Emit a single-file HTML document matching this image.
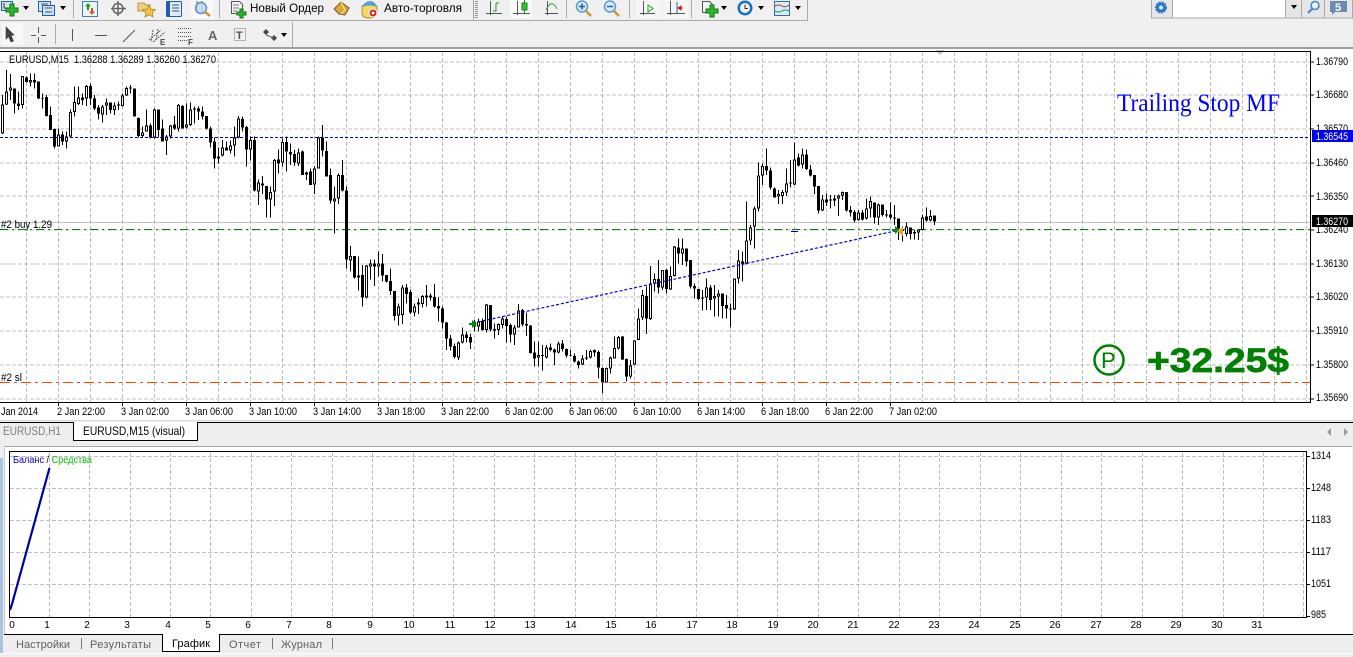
<!DOCTYPE html>
<html><head><meta charset="utf-8"><style>
html,body{margin:0;padding:0;background:#f0f0f0;overflow:hidden}
svg{display:block}
text{font-family:"Liberation Sans","Noto Sans CJK SC",sans-serif;font-size:10px;fill:#000;white-space:pre}
.a{font-size:11px}
.g{stroke:#c0c0c0;stroke-width:1;stroke-dasharray:4 2;fill:none}
.w{stroke:#000;stroke-width:3;fill:none}
.b{stroke:#000;stroke-width:9;fill:none}
.i{stroke:#fff;stroke-width:3;fill:none}
.t{font-size:11px;fill:#606060}
</style></head><body>
<svg width="1353" height="657" viewBox="0 0 1353 657" xmlns="http://www.w3.org/2000/svg">
<rect width="1353" height="657" fill="#f0f0f0"/>
<!-- toolbar structure -->
<path d="M0 20.500H807.500V0" stroke="#aaa" fill="none"/>
<path d="M0 47.500H292.500V22" stroke="#aaa" fill="none"/>
<rect x="0" y="47" width="1353" height="2" fill="#a0a0a0"/>
<path d="M73.500 0V18M219.500 0V18M473.500 0V20M566.500 0V18M629.500 0V18M691.500 0V18M55.500 24V44" stroke="#aaa"/>
<path d="M476.500 1V19" stroke="#999" stroke-width="3" stroke-dasharray="1 1"/>
<!-- row 1 icons -->
<g>
<rect x="1.500" y="1.500" width="11" height="9" fill="#cfe3f7" stroke="#1f5fa8"/>
<path d="M4 3V8H10" stroke="#333" fill="none"/>
<path d="M10 4H14V8H18V12H14V16H10V12H6V8H10Z" fill="#2fb52f" stroke="#0c7a0c"/>
<path d="M23 6h6l-3 4z" fill="#000"/>
<rect x="38.500" y="1.500" width="12" height="10" fill="#d8e8f8" stroke="#1f5fa8"/>
<rect x="42.500" y="5.500" width="12" height="10" fill="#cfe3f7" stroke="#1f5fa8"/>
<path d="M41 4H48M45 8H52M45 12H52" stroke="#456"/>
<path d="M60 6h6l-3 4z" fill="#000"/>
<rect x="82.500" y="1.500" width="15" height="15" fill="#eef4fb" stroke="#3f7fc0"/>
<path d="M88 3l3 3.500H89V10H87V6.500H85Z" fill="#16a016"/>
<path d="M92 15l3-3.500H93V8H91v3.500H89Z" fill="#e05020"/>
<circle cx="118" cy="8.500" r="5" fill="none" stroke="#666" stroke-width="1.500"/>
<path d="M118 1V16M111 8.500H126" stroke="#666" stroke-width="1.500"/>
<path d="M138 3h6l2 2h4v6h-12z" fill="#f0d080" stroke="#b89440"/>
<path d="M149 5l2 4 4.500.600-3.300 3 .8 4.400-4-2.200-4 2.200.8-4.400-3.300-3 4.500-.600z" fill="#f4c040" stroke="#a08020" stroke-width=".7"/>
<rect x="166.500" y="1.500" width="15" height="15" rx="1" fill="#dcebfa" stroke="#1f5fa8"/>
<path d="M167 2h3v14h-3z" fill="#1f5fa8"/><path d="M172 5h7M172 8h7M172 11h7" stroke="#456"/>
<rect x="191" y="0" width="22" height="18" fill="#f8f8f8"/>
<path d="M197 1V13M202 1V13" stroke="#666"/>
<circle cx="201" cy="8" r="5.500" fill="#bcd8f2" fill-opacity=".8" stroke="#6a90b8" stroke-width="1.500"/>
<path d="M205 12l5 4" stroke="#c89a30" stroke-width="2.500"/>
<path d="M231.500 1.500h8l3 3v9h-11z" fill="#f4f4f4" stroke="#555"/><path d="M233 5h6M233 8h6M233 11h4" stroke="#777"/>
<path d="M240 9h3v3h3v3h-3v3h-3v-3h-3v-3h3z" fill="#2fb52f" stroke="#0c7a0c"/>
<text x="250" y="12" textLength="74" lengthAdjust="spacingAndGlyphs" style="font-size:12px">Новый Ордер</text>
<path d="M334 9l7-7 8 6-4 7-6-1z" fill="#d8a838" stroke="#7a5a18"/><path d="M341 2l4 8-4 4" stroke="#fbe8a0" fill="none"/>
<path d="M362 6q8-5 15 0v8q-2 4-8 4t-7-4z" fill="#f4d860" stroke="#b09030"/>
<path d="M362 7q3-6 8-6t7 6q-7-3-15 0z" fill="#5a9fd8"/>
<circle cx="373" cy="13" r="4" fill="#d02020" stroke="#fff"/><circle cx="373" cy="13" r="1.500" fill="#fff"/>
<text x="384" y="12" textLength="78" lengthAdjust="spacingAndGlyphs" style="font-size:12px">Авто-торговля</text>
<path d="M490.500 1V15M486 13.500H502" stroke="#555" fill="none"/>
<path d="M496 3H499M496 3V11H493" stroke="#16a016" fill="none"/>
<rect x="510" y="0" width="22" height="18" fill="#f8f8f8"/>
<path d="M517.500 1V15M513 13.500H530" stroke="#555"/>
<path d="M524.500 0V14" stroke="#1a8a1a"/><rect x="522" y="3" width="5" height="7" fill="#30c030" stroke="#1a8a1a"/>
<path d="M547.500 1V15M545 13.500H558" stroke="#555"/><path d="M546 10q4-8 7-6t4 5" stroke="#3a9a3a" fill="none"/>
<circle cx="582" cy="6.500" r="5.500" fill="#d8eaf8" stroke="#5a9ad0" stroke-width="1.500"/><path d="M579 6.500h6M582 3.500v6" stroke="#2060a0" stroke-width="1.500"/><path d="M586 11l5 5" stroke="#c89a30" stroke-width="2.500"/>
<circle cx="610" cy="6.500" r="5.500" fill="#d8eaf8" stroke="#5a9ad0" stroke-width="1.500"/><path d="M607 6.500h6" stroke="#2060a0" stroke-width="1.500"/><path d="M614 11l5 5" stroke="#c89a30" stroke-width="2.500"/>
<rect x="636" y="0" width="25" height="18" fill="#f6f6f6"/>
<path d="M643.500 1V15M640 13.500H655" stroke="#555"/><path d="M648 5l5 3.500-5 3.500z" fill="#fff" stroke="#20a020"/>
<rect x="663" y="0" width="25" height="18" fill="#f6f6f6"/>
<path d="M670.500 1V15M667 13.500H685" stroke="#555"/><path d="M677 2V14" stroke="#3060b0"/><path d="M683 8h-4M678 8l3-2v4z" fill="#c02020" stroke="#c02020"/>
<path d="M702.500 1.500h7l3 3v8h-10z" fill="#f4f4f4" stroke="#555"/>
<path d="M710 5h4v4h4v4h-4v4h-4v-4h-4V9h4z" fill="#2fb52f" stroke="#0c7a0c"/>
<path d="M721 6h6l-3 4z" fill="#000"/>
<circle cx="745" cy="8" r="7.500" fill="#1f6fc0"/><circle cx="745" cy="8" r="5" fill="#f4f4f4"/><path d="M745 4.500V8.500H748" stroke="#333" fill="none"/>
<path d="M758 6h6l-3 4z" fill="#000"/>
<rect x="774.500" y="1.500" width="15" height="14" fill="#dcebfa" stroke="#2f6fb0"/><path d="M775 6q4-2 7 0t7-1" stroke="#b04020" fill="none"/><path d="M775 11q4 2 7 0t7 0" stroke="#20a040" fill="none"/>
<path d="M795 6h6l-3 4z" fill="#000"/>
</g>
<!-- right controls -->
<rect x="1151.500" y="-1" width="201" height="19" fill="#e6e6e6" stroke="#aaa"/>
<rect x="1172.500" y="-1" width="113" height="19" fill="#fff" stroke="#aaa"/>
<path d="M1301.500 0V18M1324.500 0V18" stroke="#aaa"/>
<circle cx="1161" cy="7.500" r="5" fill="#2f75c8" stroke="#2f75c8" stroke-width="2" stroke-dasharray="2 1"/><circle cx="1161" cy="7.500" r="2" fill="#dbeafa"/>
<path d="M1291 5h6l-3 4z" fill="#000"/>
<circle cx="1315" cy="5.500" r="4" fill="#eaf3fb" stroke="#3f86cc" stroke-width="1.500"/><path d="M1312 9l-4 4" stroke="#3f86cc" stroke-width="2"/>
<path d="M1330 1h17v11h-12l-3 3v-3h-2z" fill="#6a8ab0"/>
<text x="1335" y="11" style="font-size:11px;font-weight:bold;fill:#fff">5</text>
<!-- row 2 icons -->
<rect x="2" y="23" width="21" height="22" fill="#f8f8f8"/>
<path d="M6 27l8 8-3 .500 2.500 5.500-2.500 1-2.500-5.500-2.500 2.500z" fill="#444" stroke="#333" stroke-width=".6"/>
<path d="M38.500 27V33M38.500 37V43M31 35.500H36M41 35.500H46" stroke="#555"/>
<path d="M72.500 29V41" stroke="#555"/>
<path d="M95 35.500H107" stroke="#555"/>
<path d="M123 42L135 30" stroke="#666" stroke-width="1.200"/>
<path d="M149 40l12-10M153 42l12-10M153 30l-2 12M158 29l-2 12" stroke="#555" fill="none" stroke-dasharray="2 1"/>
<text x="160" y="45" style="font-size:8px;font-weight:bold;fill:#444">E</text>
<path d="M178 28.500H192M178 32.500H192M178 36.500H192M178 40.500H187" stroke="#555" stroke-dasharray="1 1"/>
<text x="188" y="45" style="font-size:8px;font-weight:bold;fill:#444">F</text>
<text x="208" y="40" style="font-size:13px;font-weight:bold;fill:#666">A</text>
<rect x="234.500" y="28.500" width="11" height="12" fill="none" stroke="#777" stroke-dasharray="1 1"/>
<text x="236" y="39" style="font-size:11px;font-weight:bold;fill:#555">T</text>
<path d="M266 29l3 3-3 3-3-3zM274 35l3 3-3 3-3-3z" fill="#444"/><path d="M266 35l8 3" stroke="#666"/>
<path d="M281 33h6l-3 4z" fill="#000"/>

<!-- main chart -->
<rect x="0" y="49" width="1353" height="372" fill="#fff"/>
<path class="g" d="M0 62H1310M0 95H1310M0 129H1310M0 163H1310M0 196H1310M0 230H1310M0 264H1310M0 297H1310M0 331H1310M0 365H1310M0 399H1310"/>
<path class="g" d="M26.500 52V402M58.500 52V402M90.500 52V402M122.500 52V402M154.500 52V402M186.500 52V402M218.500 52V402M250.500 52V402M282.500 52V402M314.500 52V402M346.500 52V402M378.500 52V402M410.500 52V402M442.500 52V402M474.500 52V402M506.500 52V402M538.500 52V402M570.500 52V402M602.500 52V402M634.500 52V402M666.500 52V402M698.500 52V402M730.500 52V402M762.500 52V402M794.500 52V402M826.500 52V402M858.500 52V402M890.500 52V402M922.500 52V402M954.500 52V402M986.500 52V402M1018.500 52V402M1050.500 52V402M1082.500 52V402M1114.500 52V402M1146.500 52V402M1178.500 52V402M1210.500 52V402M1242.500 52V402M1274.500 52V402M1306.500 52V402"/>
<path d="M0 222.500H1310" stroke="#c0c0c0"/>
<path d="M0 229.500H1310" stroke="#0a7a0a" stroke-dasharray="8 4 2 4"/>
<g shape-rendering="crispEdges">
<g transform="matrix(.33333 0 0 .33333 0 60)">
<path class="w" d="M8 105V222M20 30V135M32 42V120M44 85V160M56 95V150M68 48V145M80 50V68M92 40V80M104 40V85M116 65V117M128 100V145M140 105V170M152 140V205M164 205V265M176 205V260M188 215V255M200 215V265M212 148V232M224 80V170M236 80V135M248 100V135M260 75V138M272 70V135M284 105V150M296 135V178M308 135V188M320 115V165M332 128V160M344 128V165M356 125V150M368 100V140M380 80V108M392 75V100M404 85V170M416 172V232M428 200V232M440 148V215M452 190V235M464 145V235M476 148V232M488 178V245M500 225V285M512 195V235M524 168V210M536 132V215M548 135V205M560 130V205M572 128V198M584 140V190M596 140V180M608 140V178M620 168V208M632 200V262M644 232V325M656 262V310M668 240V290M680 245V272M692 242V280M704 200V290M716 168V235M728 170V215M740 198V320M752 230V302M764 230V395M776 358V435M788 348V402M800 378V472M812 380V472M824 297V438M836 268V340M848 235V320M860 230V335M872 250V315M884 270V318M896 265V318M908 272V345M920 335V360M932 325V375M944 318V402M956 230V325M968 195V290M980 245V350M992 325V430M1004 380V520M1016 340V432M1028 300V395"/>
<path class="b" d="M8 133V220M20 95V133M32 82V92M44 85V130M56 130V138M68 48V135M80 52V66M92 60V68M104 60V68M116 65V115M128 114V116M140 111V168M152 165V210M164 207V260M176 224V260M188 224V245M200 230V245M212 156V230M224 126V156M236 112V132M248 112V120M260 78V116M272 78V116M284 115V146M296 142V160M308 140V163M320 127V136M332 127V150M344 136V150M356 134V137M368 106V138M380 84V106M392 83V86M404 85V170M416 174V228M428 217V228M440 196V215M452 196V232M464 148V232M476 148V210M488 205V245M500 230V242M512 196V230M524 193V205M536 135V205M548 138V205M560 194V203M572 148V195M584 146V148M596 146V155M608 154V170M620 168V206M632 205V248M644 244V296M656 290V296M668 262V287M680 262V272M692 256V272M704 232V256M716 175V232M728 177V203M740 201V268M752 240V268M764 240V392M776 367V395M788 370V376M800 378V418M812 396V418M824 300V395M836 298V310M848 246V308M860 246V275M872 276V284M884 282V308M896 277V310M908 275V345M920 337V343M932 335V375M944 325V373M956 232V325M968 232V272M980 273V350M992 345V422M1004 415V425M1016 345V415M1028 345V392"/>
<path class="i" d="M8 136V217M20 98V130M32 85V89M68 51V132M92 63V65M176 227V257M200 233V242M212 159V227M224 129V153M236 115V129M260 81V113M308 143V160M320 130V133M344 139V147M368 109V135M380 87V103M428 220V225M440 199V212M464 151V229M500 233V239M512 199V227M536 138V202M560 197V200M572 151V192M656 293V293.100M668 265V284M692 259V269M704 235V253M716 178V229M752 243V265M776 370V392M812 399V415M824 303V392M848 249V305M896 280V307M920 340V340.100M944 328V370M956 235V322M1004 418V422M1016 348V412"/>
</g>
<g transform="matrix(.33333 0 0 .33333 330 210)">
<path class="w" d="M49 -70V175M61 108V185M73 138V205M85 140V242M97 165V290M109 165V265M121 148V208M133 148V228M145 125V200M157 132V215M169 195V218M181 175V255M193 243V332M205 280V347M217 225V342M229 222V280M241 240V312M253 280V320M265 265V312M277 255V292M289 225V290M301 250V272M313 222V292M325 262V335M337 290V355M349 336V420M361 375V422M373 400V445M385 395V450M397 352V400M409 365V397M421 370V417M433 330V365M445 325V365M457 325V362M469 282V368M481 285V365M493 340V385M505 340V375M517 320V355M529 320V398M541 340V398M553 345V405M565 282V353M577 297V350M589 308V378M601 345V430M613 395V470M625 395V470M637 405V482M649 405V445M661 400V425M673 415V465M685 395V430M697 390V425M709 415V442M721 420V440M733 430V458M745 452V475M757 435V465M769 420V450M781 418V445M793 418V440M805 422V505M817 472V550M829 472V518M841 440V490M853 380V445M865 378V418M877 378V450M889 445V515M901 450V505M913 390V465"/>
<path class="b" d="M49 -58V148M61 138V152M73 138V203M85 197V203M97 195V263M109 167V263M121 160V170M133 160V170M145 160V170M157 160V197M169 195V215M181 213V243M193 243V318M205 290V317M217 232V315M229 232V252M241 246V308M253 290V308M265 278V284M277 258V282M289 256V262M301 256V262M313 261V290M325 288V296M337 295V338M349 337V385M361 385V410M373 408V441M385 397V443M397 373V397M409 373V384M421 381V398M433 345V350M445 335V350M457 333V360M469 284V360M481 285V358M493 357V362M505 342V360M517 325V345M529 327V348M541 345V374M553 352V374M565 302V352M577 300V344M589 342V347M601 347V429M613 427V445M625 435V443M637 435V438M649 412V442M661 412V420M673 418V428M685 400V428M697 400V417M709 417V437M721 435V437M733 438V455M745 454V465M757 445V464M769 442V446M781 423V443M793 420V428M805 426V473M817 474V518M829 474V518M841 442V476M853 414V446M865 381V416M877 380V449M889 447V500M901 466V499M913 391V464"/>
<path class="i" d="M61 141V149M109 170V260M121 163V167M145 163V167M205 293V314M217 235V312M253 293V305M265 281V281.100M277 261V279M385 400V440M397 376V394M445 338V347M469 287V357M505 345V357M517 328V342M553 355V371M565 305V349M625 438V440M649 415V439M685 403V425M757 448V461M781 426V440M829 477V515M841 445V473M853 417V443M865 384V413M901 469V496M913 394V461"/>
</g>
<g transform="matrix(.33333 0 0 .33333 620 130)">
<path class="w" d="M55 535V630M67 480V570M79 470V612M91 408V570M103 430V485M115 390V490M127 420V480M139 415V490M151 410V480M163 348V440M175 325V400M187 325V405M199 355V410M211 390V475M223 460V505M235 477V510M247 480V542M259 445V540M271 465V540M283 465V560M295 480V560M307 490V565M319 495V565M331 520V592M343 445V540M355 360V460M367 365V455M379 215V403M391 285V345M403 230V355M415 97V245M427 100V165M439 55V135M451 112V178M463 173V203M475 180V222M487 180V222M499 115V198M511 90V172M523 38V165M535 70V110M547 55V115M559 58V120M571 105V140M583 135V192M595 168V250M607 195V243M619 190V228M631 195V235M643 195V228M655 193V258M667 185V210M679 186V245M691 228V260M703 240V278M715 240V272M727 240V272M739 205V268M751 200V262M763 217V280M775 220V285M787 223V260M799 240V262M811 218V268M823 225V285M835 265V330M847 290V335M859 278V320M871 292V328M883 300V328M895 298V330M907 255V302M919 232V275M931 240V275M943 256V285"/>
<path class="b" d="M55 565V630M67 495V563M79 498V565M91 460V567M103 447V461M115 447V473M127 420V473M139 420V477M151 438V479M163 350V438M175 352V371M187 355V371M199 355V395M211 390V470M223 468V476M235 477V507M247 502V506M259 472V503M271 472V510M283 498V505M295 490V500M307 490V528M319 525V535M331 535V538M343 445V538M355 391V446M367 394V401M379 331V401M391 292V331M403 235V290M415 136V235M427 108V136M439 108V122M451 122V173M463 175V203M475 192V200M487 186V198M499 160V187M511 158V161M523 88V163M535 82V107M547 73V103M559 73V117M571 118V137M583 135V170M595 168V242M607 208V241M619 208V218M631 208V212M643 205V211M655 196V206M667 186V196M679 186V242M691 240V248M703 246V271M715 248V270M727 248V268M739 235V266M751 213V236M763 217V263M775 223V262M787 223V255M799 253V257M811 254V263M823 263V265M835 265V295M847 300V303M859 290V312M871 292V312M883 306V311M895 298V307M907 262V300M919 259V272M931 258V272M943 256V275"/>
<path class="i" d="M55 568V627M67 498V560M91 463V564M103 450V458M127 423V470M151 441V476M163 353V435M187 358V368M259 475V500M283 501V502M295 493V497M343 448V535M355 394V443M379 334V398M391 295V328M403 238V287M415 139V232M427 111V133M475 195V197M487 189V195M499 163V184M523 91V160M547 76V100M607 211V238M643 208V208.100M655 199V203M667 189V193M715 251V267M739 238V263M751 216V233M775 226V259M859 293V309M895 301V304M907 265V297M931 261V269"/>
</g>
</g>
<!-- chart overlays -->
<path d="M0 137.500H1310" stroke="#0000c8" stroke-dasharray="3 2"/>
<path d="M473 323L895 231" stroke="#0000e0" fill="none" stroke-width="1.200" stroke-dasharray="3 2"/>
<path d="M0 382.500H1310" stroke="#ff4500" stroke-dasharray="10 4 3 4"/>
<path d="M791 231.500H798" stroke="#0000a0"/>
<path d="M469 323h3v-3l5 4-5 4v-3h-3z" fill="#0a8a0a"/>
<path d="M892 229h3v-3l5 4-5 4v-3h-3z" fill="#0a8a0a"/>
<path d="M897 231l6-4v9z" fill="#e0a830"/>
<path d="M935 50h10l-5 5z" fill="#c8c8c8"/>
<path d="M0 51.500H1311M0 402.500H1311" stroke="#000"/>
<path d="M1310.500 51V403" stroke="#000"/>
<path d="M1311 62h3M1311 95h3M1311 129h3M1311 163h3M1311 196h3M1311 230h3M1311 264h3M1311 297h3M1311 331h3M1311 365h3M1311 399h3" stroke="#000"/>
<path d="M58.500 403v3M122.500 403v3M186.500 403v3M250.500 403v3M314.500 403v3M378.500 403v3M442.500 403v3M506.500 403v3M570.500 403v3M634.500 403v3M698.500 403v3M762.500 403v3M826.500 403v3M890.500 403v3" stroke="#000"/>
<text class="a" x="9" y="63" textLength="207" lengthAdjust="spacingAndGlyphs">EURUSD,M15  1.36288 1.36289 1.36260 1.36270</text>
<text class="a" x="1" y="228" textLength="51" lengthAdjust="spacingAndGlyphs">#2 buy 1.29</text>
<text class="a" x="1" y="381" textLength="21" lengthAdjust="spacingAndGlyphs">#2 sl</text>
<text x="1117" y="111" textLength="163" lengthAdjust="spacingAndGlyphs" style="font-family:'Liberation Serif',serif;font-size:25px;fill:#0000ff">Trailing Stop MF</text>
<text x="1147" y="372" textLength="142" lengthAdjust="spacingAndGlyphs" style="font-size:34px;font-weight:bold;fill:#008000;stroke:#008000;stroke-width:.7">+32.25$</text>
<circle cx="1109" cy="360" r="14.500" fill="none" stroke="#008000" stroke-width="2.500"/>
<text x="1101" y="368" style="font-size:22px;fill:#008000">P</text>
<!-- price labels -->
<g>
<text class="a" x="1316" y="65" textLength="32" lengthAdjust="spacingAndGlyphs">1.36790</text>
<text class="a" x="1316" y="98" textLength="32" lengthAdjust="spacingAndGlyphs">1.36680</text>
<text class="a" x="1316" y="132" textLength="32" lengthAdjust="spacingAndGlyphs">1.36570</text>
<rect x="1312" y="130" width="41" height="12" fill="#0000f0"/>
<text class="a" x="1316" y="140" textLength="32" lengthAdjust="spacingAndGlyphs" style="fill:#fff">1.36545</text>
<text class="a" x="1316" y="166" textLength="32" lengthAdjust="spacingAndGlyphs">1.36460</text>
<text class="a" x="1316" y="200" textLength="32" lengthAdjust="spacingAndGlyphs">1.36350</text>
<text class="a" x="1316" y="233" textLength="32" lengthAdjust="spacingAndGlyphs">1.36240</text>
<rect x="1312" y="215" width="41" height="12" fill="#000"/>
<text class="a" x="1316" y="225" textLength="32" lengthAdjust="spacingAndGlyphs" style="fill:#fff">1.36270</text>
<text class="a" x="1316" y="267" textLength="32" lengthAdjust="spacingAndGlyphs">1.36130</text>
<text class="a" x="1316" y="300" textLength="32" lengthAdjust="spacingAndGlyphs">1.36020</text>
<text class="a" x="1316" y="334" textLength="32" lengthAdjust="spacingAndGlyphs">1.35910</text>
<text class="a" x="1316" y="368" textLength="32" lengthAdjust="spacingAndGlyphs">1.35800</text>
<text class="a" x="1316" y="401" textLength="32" lengthAdjust="spacingAndGlyphs">1.35690</text>
</g>
<!-- time labels -->
<g>
<text class="a" x="1" y="415" textLength="37" lengthAdjust="spacingAndGlyphs">Jan 2014</text>
<text class="a" x="57" y="415" textLength="48" lengthAdjust="spacingAndGlyphs">2 Jan 22:00</text>
<text class="a" x="121" y="415" textLength="48" lengthAdjust="spacingAndGlyphs">3 Jan 02:00</text>
<text class="a" x="185" y="415" textLength="48" lengthAdjust="spacingAndGlyphs">3 Jan 06:00</text>
<text class="a" x="249" y="415" textLength="48" lengthAdjust="spacingAndGlyphs">3 Jan 10:00</text>
<text class="a" x="313" y="415" textLength="48" lengthAdjust="spacingAndGlyphs">3 Jan 14:00</text>
<text class="a" x="377" y="415" textLength="48" lengthAdjust="spacingAndGlyphs">3 Jan 18:00</text>
<text class="a" x="441" y="415" textLength="48" lengthAdjust="spacingAndGlyphs">3 Jan 22:00</text>
<text class="a" x="505" y="415" textLength="48" lengthAdjust="spacingAndGlyphs">6 Jan 02:00</text>
<text class="a" x="569" y="415" textLength="48" lengthAdjust="spacingAndGlyphs">6 Jan 06:00</text>
<text class="a" x="633" y="415" textLength="48" lengthAdjust="spacingAndGlyphs">6 Jan 10:00</text>
<text class="a" x="697" y="415" textLength="48" lengthAdjust="spacingAndGlyphs">6 Jan 14:00</text>
<text class="a" x="761" y="415" textLength="48" lengthAdjust="spacingAndGlyphs">6 Jan 18:00</text>
<text class="a" x="825" y="415" textLength="48" lengthAdjust="spacingAndGlyphs">6 Jan 22:00</text>
<text class="a" x="889" y="415" textLength="48" lengthAdjust="spacingAndGlyphs">7 Jan 02:00</text>
</g>
<!-- chart tabs -->
<rect x="0" y="420" width="1353" height="1" fill="#d8d8d8"/>
<rect x="0" y="423" width="1353" height="23" fill="#eeeeee"/>
<path d="M0 422.500H1353" stroke="#000"/>
<path d="M73.500 422V440.500H197.500V422" stroke="#000" fill="#fff"/>
<rect x="74" y="422" width="123" height="1" fill="#fff"/>
<text x="3" y="435" textLength="58" lengthAdjust="spacingAndGlyphs" style="font-size:12px;fill:#808080">EURUSD,H1</text>
<text x="83" y="435" textLength="102" lengthAdjust="spacingAndGlyphs" style="font-size:12px">EURUSD,M15 (visual)</text>
<path d="M1331 428v8l-4-4z" fill="#999"/><path d="M1344 428v8l4-4z" fill="#999"/>
<!-- lower panel -->
<rect x="0" y="446" width="4" height="211" fill="#eee"/>
<rect x="0" y="458" width="3" height="195" fill="#a8c4e0"/>
<rect x="4" y="446" width="1348" height="188" fill="#fff"/>
<path d="M4 446.500H1352" stroke="#a8a8a8"/><path d="M4.500 446V634" stroke="#c8c8c8"/>
<path class="g" d="M10 456.500H1306M10 488.500H1306M10 520.500H1306M10 552.500H1306M10 584.500H1306"/>
<path class="g" d="M49.500 452V617M89.500 452V617M130.500 452V617M170.500 452V617M210.500 452V617M251.500 452V617M291.500 452V617M332.500 452V617M372.500 452V617M413.500 452V617M453.500 452V617M494.500 452V617M534.500 452V617M575.500 452V617M615.500 452V617M656.500 452V617M696.500 452V617M737.500 452V617M777.500 452V617M818.500 452V617M858.500 452V617M899.500 452V617M939.500 452V617M980.500 452V617M1020.500 452V617M1061.500 452V617M1101.500 452V617M1142.500 452V617M1182.500 452V617M1223.500 452V617M1263.500 452V617M1303.500 452V617"/>
<path d="M9.500 617.500V451.500H1306.500V617.500H9.500Z" stroke="#000" fill="none"/>
<path d="M1307 456.500h3M1307 488.500h3M1307 520.500h3M1307 552.500h3M1307 584.500h3M1307 616.500h3" stroke="#000"/>
<path d="M10 610L12 604L49.500 468" stroke="#0000a0" stroke-width="2.200" fill="none"/>
<text x="13" y="463" textLength="79" lengthAdjust="spacingAndGlyphs" style="font-size:10px;fill:#0000d0">Баланс <tspan fill="#000">/</tspan> <tspan fill="#00c000">Средства</tspan></text>
<g>
<text class="a" x="1311" y="459" textLength="20" lengthAdjust="spacingAndGlyphs">1314</text>
<text class="a" x="1311" y="491" textLength="20" lengthAdjust="spacingAndGlyphs">1248</text>
<text class="a" x="1311" y="523" textLength="20" lengthAdjust="spacingAndGlyphs">1183</text>
<text class="a" x="1311" y="555" textLength="20" lengthAdjust="spacingAndGlyphs">1117</text>
<text class="a" x="1311" y="587" textLength="20" lengthAdjust="spacingAndGlyphs">1051</text>
<text class="a" x="1311" y="618" textLength="15" lengthAdjust="spacingAndGlyphs">985</text>
</g>
<g text-anchor="middle">
<text x="12" y="628">0</text><text x="47" y="628">1</text><text x="87" y="628">2</text><text x="127" y="628">3</text><text x="168" y="628">4</text><text x="208" y="628">5</text><text x="248" y="628">6</text><text x="289" y="628">7</text><text x="329" y="628">8</text><text x="370" y="628">9</text><text x="409" y="628">10</text><text x="450" y="628">11</text><text x="490" y="628">12</text><text x="530" y="628">13</text><text x="571" y="628">14</text><text x="611" y="628">15</text><text x="651" y="628">16</text><text x="692" y="628">17</text><text x="732" y="628">18</text><text x="773" y="628">19</text><text x="813" y="628">20</text><text x="853" y="628">21</text><text x="894" y="628">22</text><text x="934" y="628">23</text><text x="974" y="628">24</text><text x="1015" y="628">25</text><text x="1055" y="628">26</text><text x="1096" y="628">27</text><text x="1136" y="628">28</text><text x="1176" y="628">29</text><text x="1217" y="628">30</text><text x="1257" y="628">31</text>
</g>
<!-- bottom tabs -->
<rect x="4" y="634" width="1349" height="19" fill="#eeeeee"/>
<path d="M4 634.500H1353" stroke="#000"/>
<path d="M162.500 634V651.500H219.500V634" stroke="#000" fill="#fff"/>
<rect x="163" y="634" width="56" height="1" fill="#fff"/>
<path d="M81.500 638V649M272.500 638V649M332.500 638V649" stroke="#777"/>
<text class="t" x="16" y="648" textLength="54">Настройки</text>
<text class="t" x="90" y="648" textLength="61">Результаты</text>
<text x="172" y="647" textLength="38" style="font-size:11px">График</text>
<text class="t" x="229" y="648" textLength="32">Отчет</text>
<text class="t" x="281" y="648" textLength="41">Журнал</text>
<rect x="0" y="653" width="1353" height="1" fill="#fff"/>
</svg>
</body></html>
